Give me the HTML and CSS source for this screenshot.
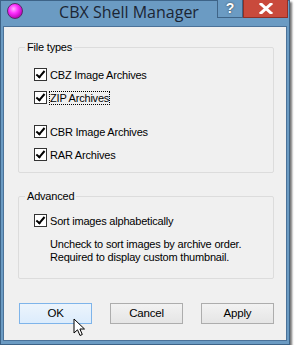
FILE: index.html
```html
<!DOCTYPE html>
<html lang="en">
<head>
  <meta charset="UTF-8">
  <title>CBX Shell Manager</title>
  <link rel="stylesheet" href="styles.css">
</head>
<body>
  <div class="window">
    <div class="titlebar">
      <span class="app-icon"></span>
      <span class="title">CBX Shell Manager</span>
      <span class="btn-help">?</span>
      <span class="btn-close">
        <svg width="14" height="11" viewBox="0 0 14 11"><path d="M2 1 L12 10 M12 1 L2 10" stroke="#fff" stroke-width="3" stroke-linecap="square"/></svg>
      </span>
    </div>
    <div class="client">
      <fieldset class="group types">
        <legend>File types</legend>
        <label class="check"><span class="box"></span>CBZ Image Archives</label>
        <label class="check"><span class="box"></span><span class="focus">ZIP Archives</span></label>
        <label class="check gap"><span class="box"></span>CBR Image Archives</label>
        <label class="check"><span class="box"></span>RAR Archives</label>
      </fieldset>
      <fieldset class="group adv">
        <legend>Advanced</legend>
        <label class="check"><span class="box"></span>Sort images alphabetically</label>
        <p class="note">Uncheck to sort images by archive order.<br>Required to display custom thumbnail.</p>
      </fieldset>
      <div class="buttons">
        <span class="button default">OK</span>
        <span class="button">Cancel</span>
        <span class="button">Apply</span>
      </div>
    </div>
    <svg class="cursor" width="14" height="20" viewBox="0 0 14 20"><path d="M1 1 L1 15 L4.5 11.8 L7 17.5 L9.3 16.5 L6.9 11 L11.5 11 Z" fill="#fff" stroke="#000" stroke-width="1"/></svg>
  </div>
</body>
</html>
```
FILE: styles.css
```css
* {
  box-sizing: border-box;
}

body {
  margin: 0;
  background: #fff;
  font-family: "Liberation Sans", Arial, sans-serif;
  font-size: 11px;
  letter-spacing: -0.2px;
  color: #000;
}

.window {
  position: relative;
  width: 290px;
  height: 345px;
  background: #6b9bc3;
  border: 1px solid #3d6387;
  box-shadow: 2px 2px 2px rgba(0, 0, 0, 0.55);
  padding: 0 2px 3px 2px;
  display: flex;
  flex-direction: column;
}

.titlebar {
  height: 25px;
  display: flex;
  align-items: flex-start;
  flex-shrink: 0;
}

.app-icon {
  width: 16px;
  height: 16px;
  margin: 2px 0 0 4px;
  border-radius: 50%;
  background: radial-gradient(circle at 40% 35%, #ffb0ff 0, #ff30ff 35%, #b000b0 80%);
  border: 1px solid #5a2b6a;
}

.title {
  flex: 1;
  text-align: center;
  font-family: "Open Sans", "Noto Sans", sans-serif;
  font-size: 16px;
  letter-spacing: 0;
  line-height: 20px;
  margin-top: 1px;
  padding-left: 18px;
  color: #1b2533;
}

.btn-help {
  width: 26px;
  height: 18px;
  margin-top: -1px;
  background: #6b9bc3;
  border: 1px solid #3f6487;
  border-top: none;
  color: #fff;
  font-weight: bold;
  font-size: 14px;
  line-height: 17px;
  text-align: center;
  text-shadow: 0 0 2px #333;
}

.btn-close {
  width: 45px;
  height: 18px;
  margin-top: -1px;
  margin-right: -1px;
  background: #c94a3c;
  border: 1px solid #8f2f26;
  border-top: none;
  display: flex;
  align-items: center;
  justify-content: center;
}

.client {
  flex: 1;
  background: #f0f0f0;
  border: 1px solid #4b7299;
  padding: 14px 12px 0 14px;
}

.group {
  margin: 0;
  border: 1px solid #dcdcdc;
  border-radius: 2px;
  padding: 4px 0 0 15px;
}

.group legend {
  padding: 0 2px;
  margin-left: -9px;
  line-height: 13px;
}

.types {
  height: 132px;
}

.adv {
  margin-top: 17px;
  height: 89px;
}

.check {
  display: flex;
  align-items: center;
  height: 13px;
  margin-top: 10px;
}

.check.gap {
  margin-top: 21px;
}

.adv .check {
  margin-top: 7px;
}

.box {
  width: 13px;
  height: 13px;
  margin-right: 3px;
  border: 1px solid #333;
  background: #fff;
  position: relative;
}

.box::after {
  content: "";
  position: absolute;
  left: 3px;
  top: 0px;
  width: 3px;
  height: 7px;
  border: solid #000;
  border-width: 0 2px 2px 0;
  transform: rotate(40deg);
}

.focus {
  outline: 1px dotted #000;
  outline-offset: 0;
}

.note {
  margin: 11px 0 0 16px;
  line-height: 13px;
}

.buttons {
  display: flex;
  gap: 18px;
  margin-top: 24px;
  padding-left: 1px;
}

.button {
  width: 73px;
  height: 21px;
  border: 1px solid #adadad;
  background: linear-gradient(#f2f2f2, #e5e5e5);
  text-align: center;
  line-height: 19px;
  font-size: 11.5px;
}

.button.default {
  border-color: #7eb4ea;
  background: linear-gradient(#ecf4fc, #dcecfc);
}

.cursor {
  position: absolute;
  left: 72px;
  top: 317px;
}
```
